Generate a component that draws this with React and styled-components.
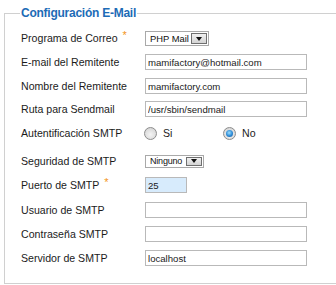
import React from "react";
import styled, { createGlobalStyle } from "styled-components";

const Global = createGlobalStyle`
  html, body { margin: 0; padding: 0; background: #fff; overflow: hidden; }
  body { font-family: "Liberation Sans", Arial, sans-serif; }
`;

const Page = styled.div`
  padding: 6px 0 0 4px;
  width: 336px;
  height: 285px;
  box-sizing: border-box;
`;

const Fieldset = styled.fieldset`
  margin: 0;
  width: 340px;
  box-sizing: border-box;
  border: 1px solid #d0d0d0;
  padding: 0 0 17px 15px;
`;

const Legend = styled.legend`
  padding: 0 1px;
  font-size: 12px;
  line-height: 15px;
  font-weight: bold;
  letter-spacing: -0.25px;
  color: #1d6bb6;
`;

const Row = styled.div`
  display: flex;
  align-items: center;
  height: 16px;
  margin-top: ${(p) => p.$mt}px;
`;

const Label = styled.label`
  width: 125px;
  flex: none;
  font-size: 10.6px;
  color: #1b1b1b;
  white-space: nowrap;
  padding-left: 1px;
  box-sizing: border-box;
`;

const Req = styled.span`
  color: #f39422;
  font-size: 11px;
  position: relative;
  top: -3px;
  margin-left: 5px;
`;

const TextInput = styled.input`
  box-sizing: border-box;
  width: ${(p) => p.$w || 162}px;
  height: 16px;
  margin: 0;
  padding: 0 2px;
  border: 1px solid #b9b9b9;
  background: ${(p) => (p.$focus ? "#d7ebfc" : "#fff")};
  font-family: "Liberation Sans", Arial, sans-serif;
  font-size: 9.6px;
  color: #1a1a1a;
  outline: none;
`;

const Select = styled.div`
  box-sizing: border-box;
  display: flex;
  align-items: center;
  justify-content: space-between;
  width: ${(p) => p.$w}px;
  height: ${(p) => p.$h}px;
  border: 1px solid #a9a9a9;
  background: #fff;
  padding: 0 0 0 4px;
`;

const SelectText = styled.span`
  font-size: ${(p) => p.$fs}px;
  color: #111;
  white-space: nowrap;
  letter-spacing: ${(p) => p.$ls || 0}px;
`;

const SelectButton = styled.span`
  box-sizing: border-box;
  width: 16px;
  height: calc(100% - 2px);
  margin-right: 1px;
  border: 1px solid #6f6f6f;
  background: linear-gradient(#f0f0f0, #d4d4d4);
  display: flex;
  align-items: flex-end;
  justify-content: center;
  padding-bottom: 2px;

  &::after {
    content: "";
    width: 0;
    height: 0;
    border-left: 3.5px solid transparent;
    border-right: 3.5px solid transparent;
    border-top: 4px solid #111;
  }
`;

const RadioGroup = styled.div`
  display: flex;
  align-items: center;
  margin-left: -1px;
`;

const RadioOption = styled.span`
  display: flex;
  align-items: center;
  width: ${(p) => p.$w || 79}px;
  font-size: 10.6px;
  color: #1b1b1b;
`;

const RadioCircle = styled.span`
  box-sizing: border-box;
  width: 13px;
  height: 13px;
  border-radius: 50%;
  border: 1px solid #8c8c8c;
  background: radial-gradient(circle at 50% 60%, #f4f4f4 0%, #dedede 60%, #cbcbcb 100%);
  margin-right: 6px;
  display: flex;
  align-items: center;
  justify-content: center;

  &::after {
    content: "";
    display: ${(p) => (p.$checked ? "block" : "none")};
    width: 7px;
    height: 7px;
    border-radius: 50%;
    background: radial-gradient(circle at 45% 40%, #9fe0ff 0%, #2b8ad6 55%, #145092 100%);
  }
`;

export default function App() {
  return (
    <>
      <Global />
      <Page>
        <Fieldset>
          <Legend>Configuración E-Mail</Legend>

          <Row $mt={9}>
            <Label>
              Programa de Correo<Req>*</Req>
            </Label>
            <Select $w={64} $h={15}>
              <SelectText $fs={9.4}>PHP Mail</SelectText>
              <SelectButton />
            </Select>
          </Row>

          <Row $mt={8}>
            <Label>E-mail del Remitente</Label>
            <TextInput readOnly value="mamifactory@hotmail.com" />
          </Row>

          <Row $mt={8}>
            <Label>Nombre del Remitente</Label>
            <TextInput readOnly value="mamifactory.com" />
          </Row>

          <Row $mt={7}>
            <Label>Ruta para Sendmail</Label>
            <TextInput readOnly value="/usr/sbin/sendmail" />
          </Row>

          <Row $mt={8}>
            <Label>Autentificación SMTP</Label>
            <RadioGroup>
              <RadioOption>
                <RadioCircle />
                Si
              </RadioOption>
              <RadioOption>
                <RadioCircle $checked />
                No
              </RadioOption>
            </RadioGroup>
          </Row>

          <Row $mt={12}>
            <Label>Seguridad de SMTP</Label>
            <Select $w={59} $h={13}>
              <SelectText $fs={9} $ls={-0.2}>Ninguno</SelectText>
              <SelectButton />
            </Select>
          </Row>

          <Row $mt={8}>
            <Label>
              Puerto de SMTP<Req>*</Req>
            </Label>
            <TextInput readOnly value="25" $w={42} $focus />
          </Row>

          <Row $mt={9}>
            <Label>Usuario de SMTP</Label>
            <TextInput readOnly value="" />
          </Row>

          <Row $mt={8}>
            <Label>Contraseña SMTP</Label>
            <TextInput readOnly value="" />
          </Row>

          <Row $mt={8}>
            <Label>Servidor de SMTP</Label>
            <TextInput readOnly value="localhost" />
          </Row>
        </Fieldset>
      </Page>
    </>
  );
}
